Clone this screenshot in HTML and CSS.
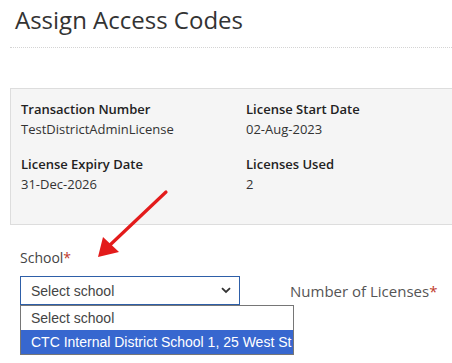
FILE: index.html
```html
<!doctype html>
<html lang="en">
  <head>
    <meta charset="utf-8">
    <title>Assign Access Codes</title>
    <link rel="stylesheet" href="styles.css">
  </head>
  <body>
    <div class="page">
      <h1 class="title">Assign Access Codes</h1>

      <div class="summary">
        <div class="field">
          <span class="label">Transaction Number</span>
          <span class="value">TestDistrictAdminLicense</span>
        </div>
        <div class="field">
          <span class="label">License Start Date</span>
          <span class="value">02-Aug-2023</span>
        </div>
        <div class="field">
          <span class="label">License Expiry Date</span>
          <span class="value">31-Dec-2026</span>
        </div>
        <div class="field">
          <span class="label">Licenses Used</span>
          <span class="value">2</span>
        </div>
      </div>

      <div class="form-row">
        <div class="form-group school">
          <label class="form-label">School<span class="req">*</span></label>
          <div class="select">
            <span>Select school</span>
            <svg class="chevron" width="10" height="7" viewBox="0 0 10 7"><path d="M1 1.2 L5 5 L9 1.2" fill="none" stroke="#333" stroke-width="1.8"/></svg>
          </div>
          <ul class="options">
            <li>Select school</li>
            <li class="active">CTC Internal District School 1, 25 West St</li>
          </ul>
        </div>
        <div class="form-group count">
          <label class="form-label big">Number of Licenses<span class="req">*</span></label>
        </div>
      </div>
    </div>

    <!-- annotation arrow -->
    <svg class="pointer" width="452" height="363" viewBox="0 0 452 363">
      <line x1="166" y1="192" x2="110" y2="245" stroke="#e31b1b" stroke-width="3.2" stroke-linecap="round"/>
      <polygon points="98,257 103,237 119,252" fill="#e31b1b"/>
    </svg>
  </body>
</html>
```

FILE: styles.css
```css
html {
  margin: 0;
}

body {
  margin: 0;
  min-height: 363px;
  color: #333;
  font-family: "Open Sans", "Liberation Sans", sans-serif;
  background-color: #fff;
}

.page {
  padding: 0 0 60px 10px;
}

.title {
  margin: 0;
  padding: 3px 0 11px 5px;
  font-size: 24px;
  font-weight: 400;
  line-height: 33px;
  color: #333;
  border-bottom: 1px dotted #d4d4d4;
}

.summary {
  margin-top: 40px;
  width: 442px;
  height: 137px;
  box-sizing: border-box;
  padding: 10px 10px 0;
  display: grid;
  grid-template-columns: 225px 1fr;
  grid-auto-rows: 55px;
  background-color: #f5f5f5;
  border: 1px solid #ddd;
  border-right: 0;
}

.field {
  display: flex;
  flex-direction: column;
  font-size: 13px;
  line-height: 20px;
}

.field .label {
  font-weight: 600;
  color: #222;
}

.field .value {
  color: #333;
}

.form-row {
  display: flex;
  padding: 23px 0 0 10px;
}

.form-group {
  position: relative;
}

.school {
  width: 220px;
  margin-right: 50px;
}

.form-label {
  display: block;
  font-size: 14px;
  line-height: 20px;
  color: #444;
  margin-bottom: 8px;
}

.form-label.big {
  margin-top: 33px;
  font-size: 15px;
  color: #555;
}

.req {
  color: #c0392b;
}

.select {
  height: 29px;
  box-sizing: border-box;
  border: 1px solid #2e5fa8;
  display: flex;
  align-items: center;
  justify-content: space-between;
  padding: 0 8px 0 10px;
  font-family: "Liberation Sans", Arial, sans-serif;
  font-size: 14px;
  color: #444;
}

.options {
  position: absolute;
  left: 0;
  top: 57px;
  z-index: 2;
  width: 274px;
  box-sizing: border-box;
  margin: 0;
  padding: 0;
  list-style: none;
  border: 1px solid #767676;
  background-color: #fff;
  font-family: "Liberation Sans", Arial, sans-serif;
  font-size: 14px;
  overflow: hidden;
  white-space: nowrap;
}

.options li {
  height: 24px;
  line-height: 24px;
  padding-left: 10px;
  color: #444;
}

.options li.active {
  background-color: #3767cf;
  color: #fff;
}

.pointer {
  position: absolute;
  left: 0;
  top: 0;
  pointer-events: none;
}
```
